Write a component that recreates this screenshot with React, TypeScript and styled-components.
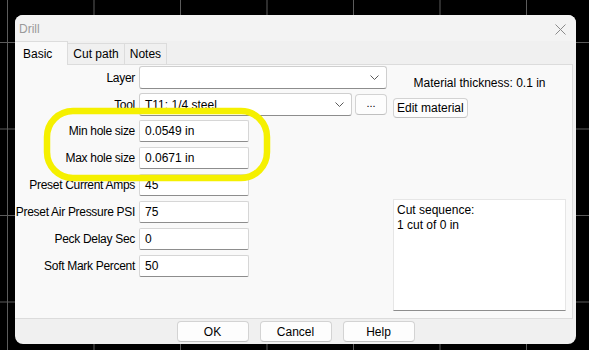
import React from 'react';
import styled, { createGlobalStyle } from 'styled-components';

const GlobalStyle = createGlobalStyle`
  html, body {
    margin: 0;
    height: 100%;
    background-color: #000;
    background-image:
      linear-gradient(to right, #5c5c5c 1px, transparent 1px),
      linear-gradient(to bottom, #5c5c5c 1px, transparent 1px);
    background-size: 86.5px 86.5px;
    background-position: 7px 42px;
    font-family: "Liberation Sans", Arial, sans-serif;
    font-size: 12px;
    color: #000;
  }
  #root {
    padding: 15px 0 0 15px;
  }
`;

const Dialog = styled.div`
  position: relative;
  width: 561px;
  height: 329px;
  background: #f0f0f0;
  border-radius: 8px;
  display: flex;
  flex-direction: column;
  overflow: hidden;
`;

const TitleBar = styled.div`
  height: 26px;
  background: #f3f3f3;
  display: flex;
  align-items: center;
  justify-content: space-between;
  padding: 2px 10px 0 4px;
  box-sizing: border-box;
  color: #9a9a9a;
`;

const CloseIcon = () => (
  <svg width="11" height="11" viewBox="0 0 11 11">
    <path d="M0.5 0.5 L10.5 10.5 M10.5 0.5 L0.5 10.5" stroke="#8a8a8a" strokeWidth="1" fill="none" />
  </svg>
);

const TabStrip = styled.div`
  height: 23px;
  display: flex;
  align-items: flex-end;
  background: #f0f0f0;
`;

const Tab = styled.div<{ $active?: boolean }>`
  height: ${p => (p.$active ? '24px' : '21px')};
  margin-bottom: ${p => (p.$active ? '-1px' : '0')};
  padding: ${p => (p.$active ? '0 15px 0 8px' : '0 5px')};
  display: flex;
  align-items: center;
  box-sizing: border-box;
  background: ${p => (p.$active ? '#f9f9f9' : '#f0f0f0')};
  border: 1px solid #dcdcdc;
  border-bottom: none;
  border-left: ${p => (p.$active ? 'none' : '1px solid #dcdcdc')};
  position: relative;
  z-index: ${p => (p.$active ? 1 : 0)};
  & + & {
    margin-left: -1px;
  }
`;

const Panel = styled.div`
  flex: 1;
  margin-right: 3px;
  background: #f9f9f9;
  border-top: 1px solid #dcdcdc;
  border-right: 1px solid #dcdcdc;
  border-bottom: 1px solid #dcdcdc;
  display: flex;
`;

const LeftCol = styled.div`
  width: 378px;
  flex-shrink: 0;
  display: flex;
  flex-direction: column;
`;

const Row = styled.div<{ $gap: number }>`
  display: flex;
  align-items: center;
  margin-top: ${p => p.$gap}px;
`;

const Label = styled.div`
  width: 124px;
  flex-shrink: 0;
  padding-right: 4px;
  box-sizing: border-box;
  display: flex;
  justify-content: flex-end;
  white-space: nowrap;
  letter-spacing: -0.3px;
`;

const Combo = styled.div<{ $w: number }>`
  width: ${p => p.$w}px;
  flex-shrink: 0;
  height: 23px;
  box-sizing: border-box;
  background: #fff;
  border: 1px solid #cfcfcf;
  border-bottom-color: #8d8d8d;
  border-radius: 3px;
  display: flex;
  align-items: center;
  justify-content: space-between;
  padding: 0 7px 0 5px;
`;

const Chevron = () => (
  <svg width="9" height="5" viewBox="0 0 9 5">
    <path d="M0.5 0.5 L4.5 4.5 L8.5 0.5" stroke="#5a5a5a" strokeWidth="1" fill="none" />
  </svg>
);

const Input = styled.div`
  width: 110px;
  flex-shrink: 0;
  height: 22px;
  box-sizing: border-box;
  background: #fff;
  border: 1px solid #d6d6d6;
  border-bottom-color: #8d8d8d;
  border-radius: 2px;
  display: flex;
  align-items: center;
  padding-left: 5px;
`;

const Button = styled.div<{ $w?: number }>`
  width: ${p => (p.$w ? `${p.$w}px` : 'auto')};
  flex-shrink: 0;
  height: 21px;
  box-sizing: border-box;
  padding: ${p => (p.$w ? '0' : '0 3px')};
  background: #fdfdfd;
  border: 1px solid #d3d3d3;
  border-bottom-color: #c0c0c0;
  border-radius: 4px;
  display: flex;
  align-items: center;
  justify-content: center;
`;

const DotsButton = styled(Button)`
  margin-left: 3px;
  font-size: 11px;
  padding-bottom: 3px;
`;

const RightCol = styled.div`
  flex: 1;
  display: flex;
  flex-direction: column;
  align-items: flex-start;
  padding-right: 6px;
`;

const Thickness = styled.div`
  align-self: center;
  margin-top: 11px;
  line-height: 15px;
`;

const EditButton = styled(Button)`
  margin-top: 7px;
  height: 20px;
`;

const CutBox = styled.div`
  margin-top: auto;
  margin-bottom: 7px;
  width: 100%;
  height: 112px;
  box-sizing: border-box;
  background: #fff;
  border: 1px solid #e6e6e6;
  border-bottom-color: #8d8d8d;
  padding: 3px 3px;
  line-height: 15px;
`;

const Footer = styled.div`
  height: 25px;
  display: flex;
  justify-content: center;
  align-items: flex-start;
  gap: 11px;
  padding-top: 2px;
  box-sizing: border-box;
`;

const Highlight = styled.svg`
  position: absolute;
  left: 27px;
  top: 91px;
  pointer-events: none;
`;

const fields = [
  { label: 'Min hole size', value: '0.0549 in' },
  { label: 'Max hole size', value: '0.0671 in' },
  { label: 'Preset Current Amps', value: '45' },
  { label: 'Preset Air Pressure PSI', value: '75' },
  { label: 'Peck Delay Sec', value: '0' },
  { label: 'Soft Mark Percent', value: '50' },
];

export default function App() {
  return (
    <>
      <GlobalStyle />
      <Dialog>
        <TitleBar>
          <span>Drill</span>
          <CloseIcon />
        </TitleBar>
        <TabStrip>
          <Tab $active>Basic</Tab>
          <Tab>Cut path</Tab>
          <Tab>Notes</Tab>
        </TabStrip>
        <Panel>
          <LeftCol>
            <Row $gap={1}>
              <Label>Layer</Label>
              <Combo $w={248}><span /><Chevron /></Combo>
            </Row>
            <Row $gap={4}>
              <Label>Tool</Label>
              <Combo $w={213}><span>T11: 1/4 steel</span><Chevron /></Combo>
              <DotsButton $w={32}>...</DotsButton>
            </Row>
            {fields.map((f, i) => (
              <Row key={f.label} $gap={i === 0 ? 4 : 5}>
                <Label>{f.label}</Label>
                <Input>{f.value}</Input>
              </Row>
            ))}
          </LeftCol>
          <RightCol>
            <Thickness>Material thickness: 0.1 in</Thickness>
            <EditButton>Edit material</EditButton>
            <CutBox>
              Cut sequence:
              <br />
              1 cut of 0 in
            </CutBox>
          </RightCol>
        </Panel>
        <Footer>
          <Button $w={72}>OK</Button>
          <Button $w={72}>Cancel</Button>
          <Button $w={72}>Help</Button>
        </Footer>
        <Highlight width="232" height="78" viewBox="0 0 232 78">
          <rect x="5" y="5" width="220" height="67" rx="26" ry="26" fill="none" stroke="#f5f000" strokeWidth="6.5" />
        </Highlight>
      </Dialog>
    </>
  );
}
